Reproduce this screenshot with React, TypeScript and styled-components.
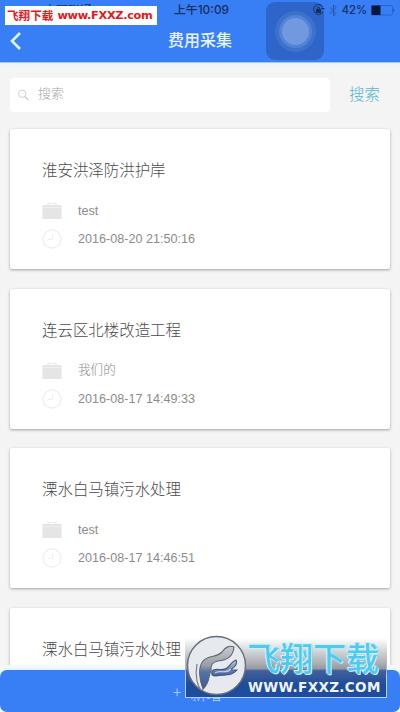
import React from 'react';
import styled, { createGlobalStyle } from 'styled-components';

const Global = createGlobalStyle`
  *, *::before, *::after { box-sizing: border-box; }
  body {
    margin: 0;
    font-family: "Liberation Sans", "Noto Sans CJK SC", sans-serif;
    background: #f4f4f4;
  }
`;

const Screen = styled.div`
  position: relative;
  display: flex;
  flex-direction: column;
  width: 400px;
  height: 712px;
  overflow: hidden;
  background: #f4f4f4;
`;

const Header = styled.header`
  position: relative;
  z-index: 0;
  flex: none;
  height: 62px;
  background: #387ef5;
  box-shadow: 0 1px 0 #a9c6f0, 0 2px 4px #e0f6ff;
`;

const StatusBar = styled.div`
  display: grid;
  grid-template-columns: 1fr auto 1fr;
  align-items: center;
  height: 20px;
  padding: 0 5px 0 44px;
  color: #14305f;
  font: 12px/20px Inter, "Noto Sans CJK SC", sans-serif;
`;

const Carrier = styled.div`
  height: 20px;
  line-height: 22px;
`;

const Clock = styled.div`
  margin-left: -36px;
  font-weight: 500;
  font-size: 11.9px;
  white-space: nowrap;
`;

const Indicators = styled.div`
  display: flex;
  align-items: center;
  justify-content: flex-end;
  gap: 4px;
  font-size: 11.2px;
  font-weight: 500;
`;

const NavBar = styled.div`
  display: grid;
  grid-template-columns: 60px 1fr 60px;
  align-items: center;
  height: 42px;
  padding: 0 9px;
`;

const Title = styled.h1`
  margin: 0;
  color: #e9f5ff;
  font-size: 16px;
  font-weight: 500;
  line-height: 42px;
  text-align: center;
`;

const SiteTag = styled.div`
  position: absolute;
  top: 6px;
  left: 5px;
  z-index: 2;
  display: flex;
  align-items: center;
  gap: 4px;
  width: 152px;
  height: 19px;
  padding-left: 2px;
  background: #fff;
  color: #e3191b;
  font: bold 11.6px/19px "Noto Sans CJK SC", sans-serif;
  white-space: nowrap;
`;

const SiteUrl = styled.span`
  font: bold 11.3px/19px "DejaVu Sans", sans-serif;
  letter-spacing: -0.3px;
`;

const AssistiveTouch = styled.div`
  position: absolute;
  top: 2px;
  left: 266px;
  z-index: -1;
  display: grid;
  place-items: center;
  width: 58px;
  height: 58px;
  border-radius: 9px;
  background: #2d66c8;
`;

const TouchDot = styled.div`
  width: 27px;
  height: 27px;
  border-radius: 50%;
  background: #7199df;
  box-shadow: 0 0 0 3px #5283d6, 0 0 0 7px #3d72cc;
`;

const SearchRow = styled.div`
  display: flex;
  flex: none;
  align-items: center;
  gap: 19px;
  margin-top: 16px;
  height: 34px;
  padding-left: 10px;
`;

const SearchField = styled.label`
  display: flex;
  align-items: center;
  gap: 9px;
  width: 320px;
  height: 34px;
  padding-left: 8px;
  border-radius: 4px;
  background: #fff;
`;

const SearchInput = styled.input`
  flex: 1;
  min-width: 0;
  height: 20px;
  margin-top: -4px;
  padding: 0;
  border: 0;
  outline: 0;
  background: transparent;
  font: 300 13px/20px "Noto Sans CJK SC", sans-serif;
  &::placeholder { color: #aaa; opacity: 1; }
`;

const SearchButton = styled.button`
  margin-top: -4px;
  padding: 0;
  border: 0;
  background: none;
  color: #55b4cf;
  font: 300 15.4px/24px "Noto Sans CJK SC", sans-serif;
`;

const List = styled.main`
  display: flex;
  flex: 1;
  flex-direction: column;
  gap: 19.6px;
  min-height: 0;
  padding: 17px 10px 0;
  overflow: hidden;
`;

const Card = styled.article`
  flex: none;
  height: 140px;
  padding: 28px 32px 0;
  border-radius: 2px;
  background: #fff;
  box-shadow: 0 1px 3px rgba(0, 0, 0, 0.34);
`;

const CardTitle = styled.h2`
  margin: 0 0 16px;
  color: #4b4b4b;
  font: 300 15.45px/24px "Noto Sans CJK SC", sans-serif;
`;

const Detail = styled.div`
  display: flex;
  align-items: center;
  gap: 16px;
  height: 28px;
  color: #8b8b8b;
  font: 12.6px/28px "Liberation Sans", "Noto Sans CJK SC", sans-serif;
`;

const DetailText = styled.span<{ $light?: boolean }>`
  margin-top: ${(p) => (p.$light ? '-3px' : '0')};
  font-family: ${(p) => (p.$light ? '"Noto Sans CJK SC", sans-serif' : 'inherit')};
  font-weight: ${(p) => (p.$light ? 300 : 400)};
`;

const FooterEdge = styled.div`
  display: flex;
  flex: none;
  flex-direction: column;
  padding-top: 5px;
  background: #f4fafd;
`;

const AddButton = styled.button`
  display: flex;
  flex: none;
  align-items: center;
  justify-content: center;
  gap: 9px;
  height: 42px;
  padding: 0 5px 0 0;
  border: 0;
  border-radius: 7px;
  background: #387ef5;
  box-shadow: 0 -1px 3px #d9f2ff;
  color: #b9d8ff;
  font: 300 16px/42px "Noto Sans CJK SC", sans-serif;
`;

const AddLabel = styled.span`
  padding-top: 3px;
`;

const Watermark = styled.div`
  position: absolute;
  top: 635px;
  left: 185px;
  display: flex;
  width: 202px;
  height: 63px;
  border: 1px solid #b5d3ff;
  border-top: 0;
  border-image: linear-gradient(rgba(181, 211, 255, 0) 40%, #b5d3ff 65%) 1;
  background: linear-gradient(rgba(255, 255, 255, 0) 5%, rgba(120, 124, 132, 0.75) 54%, #42609a 58%, #1f4c9b 80%, #1d4d9f 100%);
`;

const Brand = styled.div`
  display: flex;
  flex: none;
  flex-direction: column;
  width: 138px;
  padding-top: 4px;
`;

const BrandName = styled.div`
  color: #4fc9f0;
  font: 500 33px/36px "Noto Sans CJK SC", sans-serif;
  white-space: nowrap;
  text-shadow: 0 0 1px #fff, 1px 1px 0 #c4f2ff, -1px -1px 0 #c4f2ff, 1px 0 0 #62d1f4;
`;

const BrandUrl = styled.div`
  margin-top: 3px;
  padding-left: 1px;
  color: #f0f4fc;
  font: bold 13.5px/18px "DejaVu Sans", sans-serif;
  letter-spacing: 0.35px;
  white-space: nowrap;
`;

const BackIcon = () => (
  <svg width="14" height="20" viewBox="0 0 14 20" fill="none" stroke="#dff6ff" strokeWidth="2.6">
    <path d="M11 2L3 10L11 18" />
  </svg>
);

const LockIcon = () => (
  <svg width="12" height="12" viewBox="0 0 12 12" fill="none" stroke="#142d5c">
    <path d="M10 3a5 5 0 1 0 0 5M8.5 4.5h3" />
    <path d="M3.5 5.5h4v3h-4z" fill="#142d5c" />
    <path d="M4.4 5V4.2a1.1 1.1 0 0 1 2.2 0V5" />
  </svg>
);

const BluetoothIcon = () => (
  <svg width="9" height="13" viewBox="0 0 9 13" fill="none" stroke="#2b569f">
    <path d="M1 3.5l6 6L4.5 12V1L7 3.5l-6 6" />
  </svg>
);

const BatteryIcon = () => (
  <svg width="24" height="11" viewBox="0 0 24 11">
    <rect x=".5" y=".5" width="21" height="9.5" rx="1.5" fill="none" stroke="#2a65c8" />
    <path d="M.5 .5h9v9.5h-9z" fill="#06163c" />
    <path d="M22.5 3.5q2 1.5 0 3z" fill="#173f82" />
  </svg>
);

const SearchIcon = () => (
  <svg width="11" height="12" viewBox="0 0 11 12" fill="none" stroke="#c4c4c4">
    <circle cx="4.2" cy="4.8" r="3.7" strokeWidth=".8" />
    <path d="M7 7.7l3.5 3.3" strokeWidth="1.1" />
  </svg>
);

const BriefcaseIcon = () => (
  <svg width="20" height="18" viewBox="0 0 20 18">
    <path d="M6 3V1.5h8V3" fill="none" stroke="#ededed" strokeWidth="1.4" />
    <path d="M.5 3h19v14H.5z" fill="#e5e5e5" />
    <path d="M.5 5.5h19" stroke="#f2f2f2" strokeWidth=".7" />
  </svg>
);

const TimeIcon = () => (
  <svg width="20" height="20" viewBox="0 0 20 20" fill="none" stroke="#efefef">
    <circle cx="10" cy="10" r="9" strokeWidth="1.3" />
    <path d="M10.5 4.8v5.7H6" />
  </svg>
);

const BrandMark = () => (
  <svg width="61" height="62" viewBox="0 0 61 62">
    <defs>
      <linearGradient id="field" x1="0" y1="0" x2="0" y2="1">
        <stop offset="0" stopColor="#c3c6cd" />
        <stop offset="1" stopColor="#3e5f99" />
      </linearGradient>
      <linearGradient id="plume" x1="0" y1="0" x2="0" y2="1">
        <stop offset="0" stopColor="#c8cad0" />
        <stop offset=".45" stopColor="#979da9" />
        <stop offset=".6" stopColor="#5872a4" />
        <stop offset="1" stopColor="#315b9c" />
      </linearGradient>
    </defs>
    <circle cx="30.5" cy="30.5" r="29" fill="#e6e9ee" stroke="#696d75" strokeWidth="1.4" />
    <path d="M17 54C13 44 12 32 17 26C22 20 30 23 36 17C39 12 44 10 48 12C47 22 41 25 32 26C26 27 25 30 25 35C22 42 24 48 17 54Z" fill="url(#plume)" stroke="#62666e" strokeWidth="1.1" />
    <path d="M26 36C30 32 36 37 41 33C45 30 45 27 50 25C52 29 48 33 44 35H51C45 42 38 39 30 41C26 41 25 40 26 36Z" fill="url(#field)" stroke="#3d5887" strokeWidth="1.1" />
    <path d="M11 29C9 40 11 50 15 55" fill="none" stroke="#777f8c" strokeWidth="1.2" />
    <path d="M29 38C34 34 39 40 45 34" fill="none" stroke="#c5d1e5" strokeWidth="1.2" />
  </svg>
);

const records = [
  { title: '淮安洪泽防洪护岸', person: 'test', time: '2016-08-20 21:50:16' },
  { title: '连云区北楼改造工程', person: '我们的', time: '2016-08-17 14:49:33', light: true },
  { title: '溧水白马镇污水处理', person: 'test', time: '2016-08-17 14:46:51' },
  { title: '溧水白马镇污水处理', person: '', time: '' },
];

export default function App() {
  return (
    <>
      <Global />
      <Screen>
        <Header>
          <StatusBar>
            <Carrier>中国联通</Carrier>
            <Clock>上午10:09</Clock>
            <Indicators>
              <LockIcon />
              <BluetoothIcon />
              <span>42%</span>
              <BatteryIcon />
            </Indicators>
          </StatusBar>
          <NavBar>
            <BackIcon />
            <Title>费用采集</Title>
          </NavBar>
          <AssistiveTouch><TouchDot /></AssistiveTouch>
          <SiteTag>飞翔下载<SiteUrl>www.FXXZ.com</SiteUrl></SiteTag>
        </Header>
        <SearchRow>
          <SearchField>
            <SearchIcon />
            <SearchInput placeholder="搜索" />
          </SearchField>
          <SearchButton>搜索</SearchButton>
        </SearchRow>
        <List>
          {records.map((r, i) => (
            <Card key={i}>
              <CardTitle>{r.title}</CardTitle>
              {r.time && (
                <>
                  <Detail><BriefcaseIcon /><DetailText $light={r.light}>{r.person}</DetailText></Detail>
                  <Detail><TimeIcon /><DetailText>{r.time}</DetailText></Detail>
                </>
              )}
            </Card>
          ))}
        </List>
        <FooterEdge>
          <AddButton><span>+</span><AddLabel>新增</AddLabel></AddButton>
        </FooterEdge>
        <Watermark>
          <BrandMark />
          <Brand>
            <BrandName>飞翔下载</BrandName>
            <BrandUrl>WWW.FXXZ.COM</BrandUrl>
          </Brand>
        </Watermark>
      </Screen>
    </>
  );
}
